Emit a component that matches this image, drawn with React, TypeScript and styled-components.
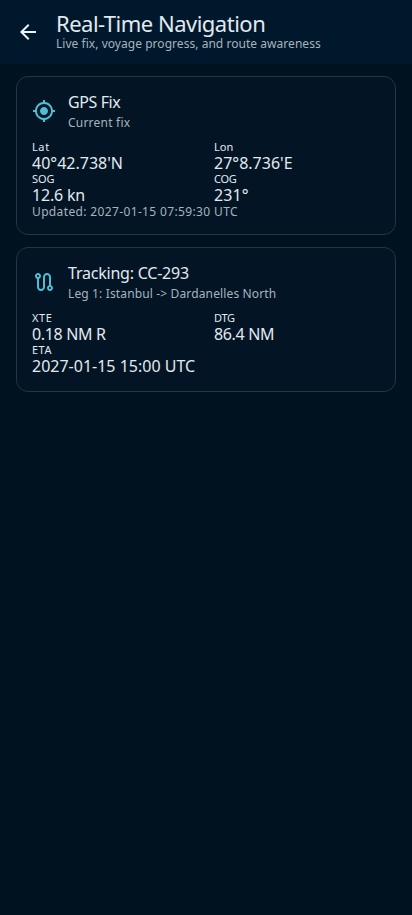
import React from "react";
import styled, { createGlobalStyle } from "styled-components";

const GlobalStyle = createGlobalStyle`
  *, *::before, *::after { box-sizing: border-box; }
  body {
    margin: 0;
    background: #00111f;
    color: #e2e9f0;
    font-family: "Noto Sans", "Open Sans", sans-serif;
  }
`;

const Screen = styled.main`
  min-height: 915px;
  background: #00111f;
`;

const TopBar = styled.header`
  display: flex;
  align-items: center;
  height: 64px;
  padding-left: 16px;
  gap: 16px;
  background: #00182c;
`;

const BackButton = styled.button`
  display: flex;
  padding: 0;
  border: 0;
  background: none;
  color: #f0f5fa;
`;

const Icon = styled.svg`
  display: block;
  flex: none;
  width: 24px;
  height: 24px;
  fill: currentColor;
`;

const Heading = styled.div`
  display: flex;
  flex-direction: column;
  padding-bottom: 1px;
`;

type Spacing = { $spacing?: number };

const PageTitle = styled.h1<Spacing>`
  margin: 0;
  font-size: 22px;
  line-height: 25px;
  font-weight: 400;
  white-space: nowrap;
  letter-spacing: ${(p) => p.$spacing ?? 0}px;
`;

const Caption = styled.p<Spacing>`
  margin: 0;
  font-size: 12px;
  line-height: 16px;
  color: #a6b3be;
  white-space: nowrap;
  letter-spacing: ${(p) => p.$spacing ?? 0}px;
`;

const UpdatedAt = styled(Caption)`
  margin-top: 1px;
`;

const Content = styled.div`
  display: flex;
  flex-direction: column;
  gap: 12px;
  padding: 12px 16px;
`;

const Card = styled.section<{ $height: number }>`
  height: ${(p) => p.$height}px;
  padding: 12px 15px 15px;
  border: 1px solid #233643;
  border-radius: 12px;
  background: #031525;
`;

const CardHeader = styled.div`
  display: flex;
  align-items: center;
  gap: 12px;
  height: 43px;
  color: #4bbfd5;
`;

const CardTitle = styled.h2<Spacing>`
  margin: 0 0 2px;
  color: #e2e9f0;
  font-size: 16px;
  line-height: 22px;
  font-weight: 400;
  white-space: nowrap;
  letter-spacing: ${(p) => p.$spacing ?? 0}px;
`;

const Metrics = styled.dl`
  display: grid;
  grid-template-columns: 1fr 1fr;
  column-gap: 16px;
  margin: 7px 0 0;
`;

const Metric = styled.div`
  white-space: nowrap;
`;

const Label = styled.dt<Spacing>`
  font-size: 11px;
  line-height: 16px;
  letter-spacing: ${(p) => p.$spacing ?? 0}px;
`;

const Value = styled.dd<Spacing>`
  margin: 0;
  font-size: 16px;
  line-height: 16px;
  letter-spacing: ${(p) => p.$spacing ?? 0}px;
`;

const paths = {
  back: "M20 11H7.83l5.59-5.59L12 4l-8 8 8 8 1.41-1.41L7.83 13H20v-2z",
  gps: "M12 8c-2.21 0-4 1.79-4 4s1.79 4 4 4 4-1.79 4-4-1.79-4-4-4zm8.94 3c-.46-4.17-3.77-7.48-7.94-7.94V1h-2v2.06C6.83 3.52 3.52 6.83 3.06 11H1v2h2.06c.46 4.17 3.77 7.48 7.94 7.94V23h2v-2.06c4.17-.46 7.48-3.77 7.94-7.94H23v-2h-2.06zM12 19c-3.87 0-7-3.13-7-7s3.13-7 7-7 7 3.13 7 7-3.13 7-7 7z",
  route:
    "M19 15.18V7c0-2.21-1.79-4-4-4s-4 1.79-4 4v10c0 1.1-.9 2-2 2s-2-.9-2-2V8.82C8.16 8.4 9 7.3 9 6c0-1.66-1.34-3-3-3S3 4.34 3 6c0 1.3.84 2.4 2 2.82V17c0 2.21 1.79 4 4 4s4-1.79 4-4V7c0-1.1.9-2 2-2s2 .9 2 2v8.18c-1.16.41-2 1.51-2 2.82 0 1.66 1.34 3 3 3s3-1.34 3-3c0-1.31-.84-2.4-2-2.82zM6 7c-.55 0-1-.45-1-1s.45-1 1-1 1 .45 1 1-.45 1-1 1zm12 12c-.55 0-1-.45-1-1s.45-1 1-1 1 .45 1 1-.45 1-1 1z",
};

const Glyph = ({ name }: { name: keyof typeof paths }) => (
  <Icon viewBox="0 0 24 24" aria-hidden="true">
    <path d={paths[name]} />
  </Icon>
);

type Item = { label: string; value: string; labelGap?: number; valueGap?: number };

const fix: Item[] = [
  { label: "Lat", value: "40°42.738'N", labelGap: 0.6 },
  { label: "Lon", value: "27°8.736'E" },
  { label: "SOG", value: "12.6 kn", labelGap: -0.1, valueGap: -0.2 },
  { label: "COG", value: "231°", labelGap: -0.3, valueGap: 0.1 },
];

const voyage: Item[] = [
  { label: "XTE", value: "0.18 NM R", labelGap: 0.6, valueGap: -0.35 },
  { label: "DTG", value: "86.4 NM", labelGap: -0.3, valueGap: -0.35 },
  { label: "ETA", value: "2027-01-15 15:00 UTC", labelGap: 0.5 },
];

const MetricGrid = ({ items }: { items: Item[] }) => (
  <Metrics>
    {items.map((m) => (
      <Metric key={m.label}>
        <Label $spacing={m.labelGap}>{m.label}</Label>
        <Value $spacing={m.valueGap}>{m.value}</Value>
      </Metric>
    ))}
  </Metrics>
);

export default function App() {
  return (
    <Screen>
      <GlobalStyle />
      <TopBar>
        <BackButton aria-label="Back">
          <Glyph name="back" />
        </BackButton>
        <Heading>
          <PageTitle $spacing={-0.5}>Real-Time Navigation</PageTitle>
          <Caption $spacing={0.04}>Live fix, voyage progress, and route awareness</Caption>
        </Heading>
      </TopBar>
      <Content>
        <Card $height={159}>
          <CardHeader>
            <Glyph name="gps" />
            <div>
              <CardTitle $spacing={-0.4}>GPS Fix</CardTitle>
              <Caption $spacing={0.22}>Current fix</Caption>
            </div>
          </CardHeader>
          <MetricGrid items={fix} />
          <UpdatedAt $spacing={0.36}>Updated: 2027-01-15 07:59:30 UTC</UpdatedAt>
        </Card>
        <Card $height={145}>
          <CardHeader>
            <Glyph name="route" />
            <div>
              <CardTitle $spacing={-0.22}>Tracking: CC-293</CardTitle>
              <Caption $spacing={0.14}>{"Leg 1: Istanbul -> Dardanelles North"}</Caption>
            </div>
          </CardHeader>
          <MetricGrid items={voyage} />
        </Card>
      </Content>
    </Screen>
  );
}
